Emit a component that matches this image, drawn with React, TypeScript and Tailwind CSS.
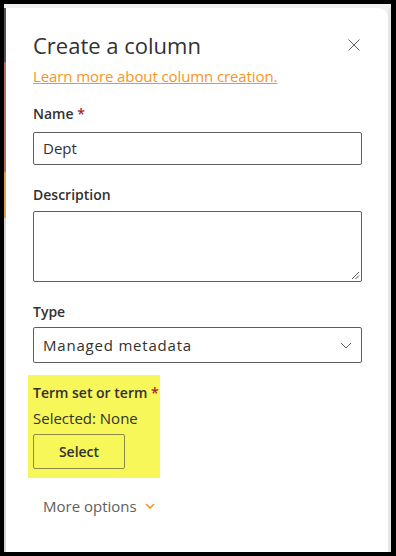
import React from 'react'

const font = { fontFamily: '"Open Sans", "Noto Sans", sans-serif' }

const App: React.FC = () => {
  return (
    <div
      className="w-[396px] h-[556px] bg-black pt-[4px] pl-[4px] pr-[5px] pb-[4px] flex flex-col"
      style={font}
    >
      <div className="h-[4px] bg-[#f0f0f0]" />
      <div className="flex flex-1 bg-[#f0f0f0]">
        {/* left edge of the page behind the panel */}
        <div className="w-[2px] flex flex-col">
          <div className="h-[54px] bg-[#555555]" />
          <div className="h-[110px] bg-[#b07262]" />
          <div className="h-[46px] bg-[#d9a352]" />
          <div className="flex-1 bg-[#d4d4d4]" />
        </div>

        <div className="flex-1 bg-white rounded-tr-[10px] pl-[27px] pr-[26px] pt-[23px] text-[#323130]">
          <div className="flex items-start justify-between">
            <h1 className="text-[22px] leading-[28px] font-normal">Create a column</h1>
            <button className="mt-[8px] mr-[2px] text-[#605e5c]">
              <svg width="12" height="12" viewBox="0 0 12 12" fill="none" stroke="currentColor" strokeWidth="1">
                <path d="M0.5 0.5L11.5 11.5M11.5 0.5L0.5 11.5" />
              </svg>
            </button>
          </div>

          <a href="#" className="block mt-[7px] text-[15px] leading-[21px] text-[#f7941d] underline tracking-[-0.1px]">
            Learn more about column creation.
          </a>

          <label className="block mt-[17px] text-[14px] leading-[20px] font-semibold">
            Name <span className="text-[#a4262c]">*</span>
          </label>
          <div className="mt-[8px] h-[33px] border border-[#605e5c] rounded-[2px] flex items-center px-[9px] text-[15px]">
            Dept
          </div>

          <label className="block mt-[20px] text-[14px] leading-[20px] font-semibold">Description</label>
          <div className="relative mt-[6px] h-[71px] border border-[#605e5c] rounded-[2px]">
            <svg className="absolute right-[1px] bottom-[1px]" width="9" height="9" viewBox="0 0 9 9" stroke="#555" strokeWidth="1">
              <path d="M8 1L1 8M8 4.5L4.5 8" />
            </svg>
          </div>

          <label className="block mt-[20px] text-[14px] leading-[20px] font-semibold">Type</label>
          <div className="mt-[5px] h-[36px] border border-[#605e5c] rounded-[2px] flex items-center justify-between px-[9px] text-[15px] tracking-[0.8px]">
            <span>Managed metadata</span>
            <svg width="12" height="7" viewBox="0 0 12 7" fill="none" stroke="#605e5c" strokeWidth="1">
              <path d="M1 1L6 6L11 1" />
            </svg>
          </div>

          <div className="mt-[12px] ml-[-5px] w-[132px] bg-[#f7f75a] pl-[5px] pt-[8px] pb-[9px]">
            <div className="text-[14px] leading-[20px] font-semibold">
              Term set or term <span className="text-[#a4262c]">*</span>
            </div>
            <div className="mt-[5px] text-[15px] leading-[20px]">Selected: None</div>
            <button className="mt-[6px] w-[92px] h-[35px] border border-[#8a8a46] rounded-[2px] text-[14px] font-semibold">
              Select
            </button>
          </div>

          <div className="mt-[17px] ml-[10px] flex items-center gap-[8px] text-[15px] text-[#605e5c]">
            <span>More options</span>
            <svg width="10" height="6" viewBox="0 0 10 6" fill="none" stroke="#f7941d" strokeWidth="1.6">
              <path d="M1 1L5 5L9 1" />
            </svg>
          </div>
        </div>

        <div className="w-[3px] bg-[#e6e6e6]" />
      </div>
    </div>
  )
}

export default App
